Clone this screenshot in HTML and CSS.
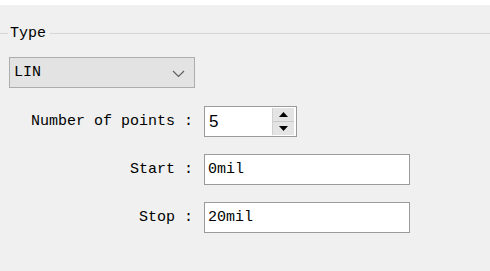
FILE: index.html
```html
<!DOCTYPE html>
<html lang="en">
<head>
  <meta charset="UTF-8">
  <title>Sweep Settings</title>
  <link rel="stylesheet" href="styles.css">
</head>
<body>

  <div class="topbar"></div>

  <div class="group">
    <div class="group-title">
      <span class="line short"></span>
      <span class="title">Type</span>
      <span class="line"></span>
    </div>

    <div class="combo">
      <span class="combo-text">LIN</span>
      <svg class="chevron" width="13" height="8" viewBox="0 0 13 8">
        <polyline points="1,1 6.5,6.5 12,1" fill="none" stroke="#606060" stroke-width="1.2"/>
      </svg>
    </div>

    <div class="fields">
      <label class="field-label">Number of points :</label>
      <div class="spinbox">
        <span class="spin-value">5</span>
        <div class="spin-buttons">
          <div class="spin-btn">
            <svg width="9" height="5" viewBox="0 0 9 5"><polygon points="4.5,0 9,5 0,5" fill="#000"/></svg>
          </div>
          <div class="spin-btn">
            <svg width="9" height="5" viewBox="0 0 9 5"><polygon points="0,0 9,0 4.5,5" fill="#000"/></svg>
          </div>
        </div>
      </div>

      <label class="field-label">Start :</label>
      <div class="textbox">0mil</div>

      <label class="field-label">Stop :</label>
      <div class="textbox">20mil</div>
    </div>
  </div>

</body>
</html>
```

FILE: styles.css
```css
body {
  margin: 0;
  background: #f0f0f0;
  font-family: "Liberation Mono", monospace;
  font-size: 15px;
  color: #000;
  height: 271px;
  overflow: hidden;
}

.topbar {
  height: 5px;
  background: #fff;
}

.group {
  padding-top: 18px;
}

.group-title {
  display: flex;
  align-items: center;
  height: 20px;
}

.title {
  padding: 0 4px 0 2px;
}

.line {
  flex: 1;
  height: 1px;
  background: #d6d6d6;
}

.line.short {
  flex: 0 0 8px;
}

.combo {
  display: flex;
  align-items: center;
  justify-content: space-between;
  box-sizing: border-box;
  margin: 14px 0 0 9px;
  width: 186px;
  height: 31px;
  padding: 0 9px 0 4px;
  background: #e3e3e3;
  border: 1px solid #adadad;
}

.chevron {
  margin-top: 2px;
}

.fields {
  display: grid;
  grid-template-columns: 193px 1fr;
  column-gap: 11px;
  row-gap: 17px;
  align-items: center;
  margin-top: 18px;
}

.field-label {
  text-align: right;
  white-space: pre;
}

.spinbox {
  display: flex;
  box-sizing: border-box;
  width: 93px;
  height: 31px;
  background: #fff;
  border: 1px solid #9a9a9a;
  padding: 1px 2px 1px 0;
}

.spin-value {
  flex: 1;
  font-family: "Liberation Sans", Arial, sans-serif;
  font-size: 17px;
  line-height: 27px;
  padding-left: 4px;
}

.spin-buttons {
  display: flex;
  flex-direction: column;
  width: 21px;
  background: #e4e4e4;
  border-left: 1px solid #d0d0d0;
}

.spin-btn {
  flex: 1;
  display: flex;
  align-items: center;
  justify-content: center;
}

.spin-btn + .spin-btn {
  border-top: 1px solid #c8c8c8;
}

.textbox {
  box-sizing: border-box;
  width: 206px;
  height: 31px;
  line-height: 29px;
  padding-left: 3px;
  background: #fff;
  border: 1px solid #9a9a9a;
}
```
